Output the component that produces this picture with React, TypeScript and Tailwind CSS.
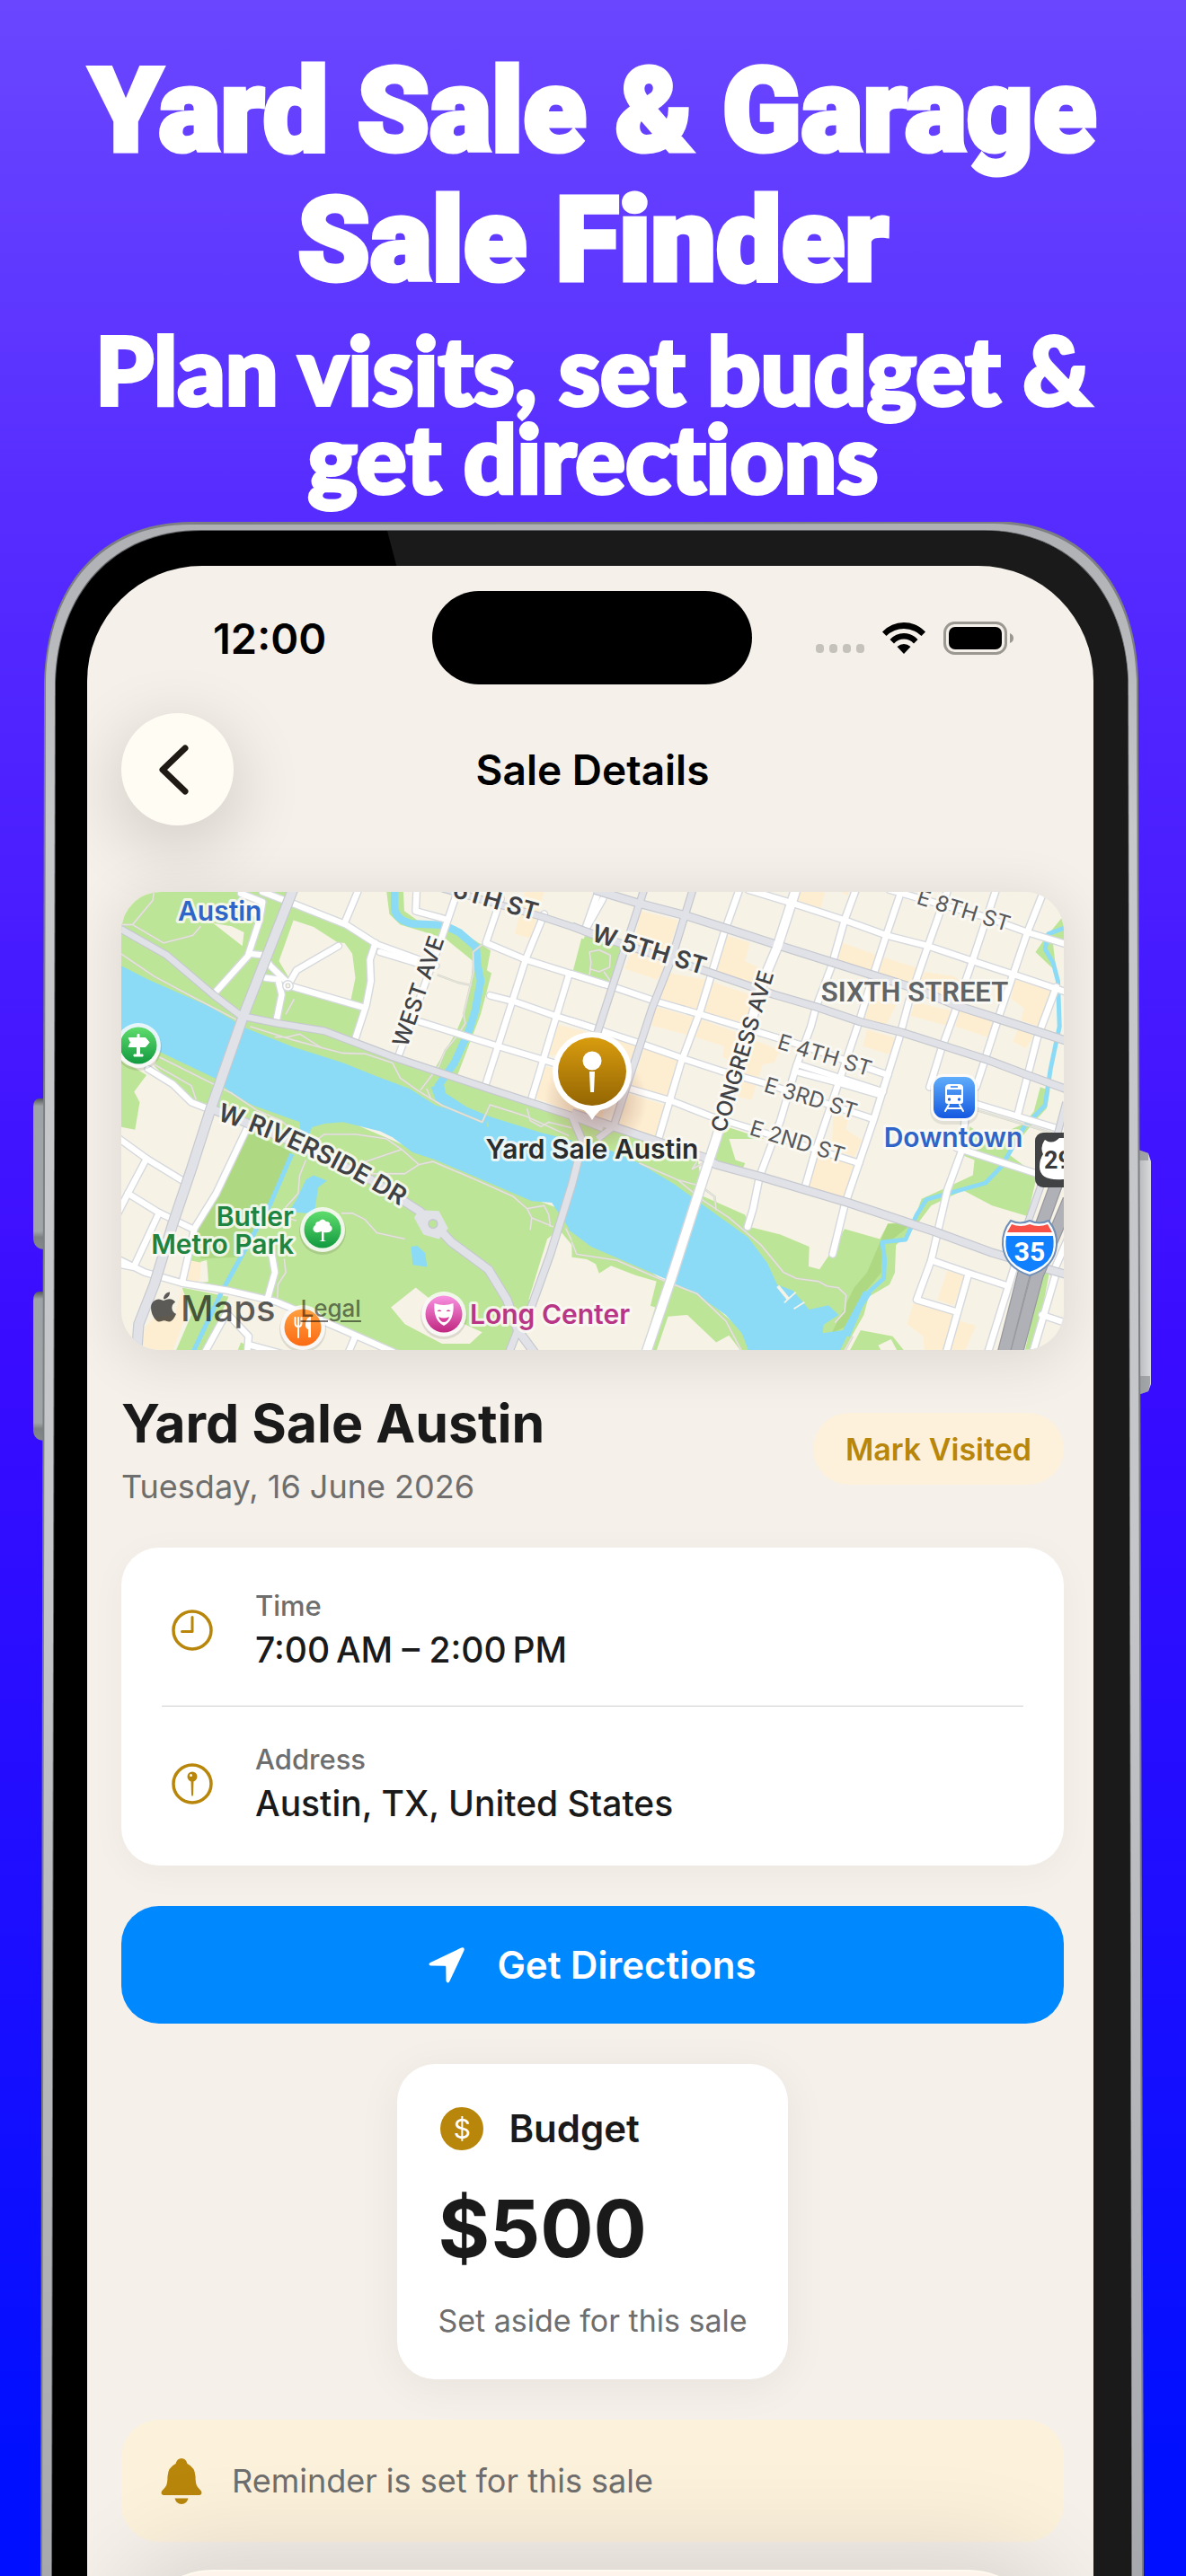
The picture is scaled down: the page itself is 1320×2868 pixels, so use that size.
import type { ReactNode } from "react";
import { FaApple } from "react-icons/fa";

/* ---------- Map geometry: two survey tiles with their own scale ---------- */

const WEST_TILE = "translate(-15 -12.5) scale(.3444 .3381)";
const EAST_TILE = "translate(505 -12.5) scale(.3571 .3381)";

type Tile = {
  transform: string;
  green: string[];
  darkGreen: string[];
  land: string[];
  peach: string[];
  water: string[];
  streams: { d: string; w: number }[];
  paths: string[];
  minor: string[];
  wide: string[];
  major: { d: string; w: number }[];
};

const west: Tile = {
  transform: WEST_TILE,
  green: [
    "M30,30H600L602,85L760,150L868,205L850,260L852,330L838,400L800,520L920,580L1230,690L1500,785L1600,815V900L1230,830L975,700L760,620L450,500L30,300Z",
    "M900,30H955L958,100L1000,130L1090,140L1160,180L1237,230L1225,295L1240,305L1205,440L1130,640L1050,630L1085,570L1125,500L1150,440L1172,350L1180,265L1090,190L1010,165L945,145L910,110Z",
    "M1545,170L1600,190V320L1505,300Z",
    "M30,580L125,640L85,695L103,730L88,820L30,808Z",
    "M170,555L345,645L480,735L640,795L640,890L450,815L380,770L290,745L150,610Z",
    "M455,815L622,845L640,790L760,785L1000,890L1210,975L1380,1050L1460,1080L1365,1385L1325,1480L1290,1560H920L740,1470L540,1385L240,1320L280,1140Z",
    "M1455,1085L1600,1200V1275L1530,1237L1455,1145L1380,1320L1370,1320Z",
    "M240,1340L390,1370L310,1560H215L270,1430Z",
    "M430,1520L450,1530V1560H415Z",
  ],
  darkGreen: ["M455,825L595,895L520,1060L420,1240L300,1245L280,1140L350,1030Z"],
  land: [
    "M600,130L665,152L745,205L765,205L790,240L800,320L785,395L600,345L553,265Z",
    "M340,140L400,150L440,170L435,215Z",
    "M430,60L495,75L485,125L400,80Z",
    "M995,1340L915,1405L960,1460L1080,1525L1170,1525L1210,1487L1130,1450Z",
    "M320,1250L325,1320L295,1325L300,1255Z",
    "M1455,1150L1395,1340L1370,1385L1360,1380L1420,1180Z",
  ],
  peach: [
    "M1350,30H1412L1367,190L1315,175Z",
    "M1455,475L1600,510V570L1425,575Z",
    "M1405,610L1600,650V815L1500,760L1380,715Z",
    "M262,1250L302,1258L296,1325L255,1318Z",
    "M150,1440L215,1430L240,1345L250,1440L205,1560H110L120,1470Z",
  ],
  water: [
    "M30,273L130,325L330,415L450,487L600,548L760,600L870,645L975,685L1060,740L1150,765L1230,812L1228,775L1400,830L1600,880V1235L1490,1145L1460,1100L1435,1060L1370,1055L1210,985L1060,920L985,895L920,845L880,825L760,795L700,800L660,812L645,850L625,855L620,795L470,740L400,700L345,650L170,565L30,500Z",
    "M1045,680L1085,665L1092,700L1160,745L1230,775L1225,812L1120,760L1060,725Z",
    "M640,985L665,970L708,988L680,1010L668,1090L640,1095L585,1090L610,1050Z",
    "M980,1205L1000,1202L1025,1225L1032,1272L985,1265Z",
  ],
  streams: [
    { d: "M927,30V90Q930,130 985,142L1085,146L1135,170L1190,218L1195,280L1205,330L1187,430L1165,500L1120,600L1065,680", w: 25 },
    { d: "M595,900L525,1065L370,1350L272,1560", w: 15 },
  ],
  paths: [
    "M30,232L150,315L260,375L420,460",
    "M44,145H80L180,205L275,180L300,150",
    "M150,30L145,65L80,145",
    "M460,480L600,525L690,550L760,568L830,570L920,600L945,650L1000,690L1080,740L1210,795L1235,738L1350,775L1490,840",
    "M540,515H580L620,505L690,550",
    "M1210,210L1180,235L1182,300L1150,440L1155,470L1130,510L1090,560L1070,610L1010,690",
    "M1030,685L1045,720",
    "M165,580L400,700L480,755L560,790L605,830",
    "M150,605L270,675L285,720",
    "M660,865L700,835H800L900,850L950,885L820,930",
    "M950,885L1005,935L960,965H850",
    "M1005,935L1050,925L1190,985L1310,1040L1355,1080L1370,1110L1440,1140",
    "M1355,1080L1410,1070L1425,1100L1430,1140",
    "M1370,1110L1365,1150",
    "M640,920L620,970L615,1030L575,1075L578,1110L610,1120",
    "M755,1095H790L830,1115L870,1160L960,1180",
    "M570,1245L575,1290L550,1330L548,1380",
    "M1480,1145L1520,1230L1600,1235",
    "M1065,310L1130,335L1175,345",
    "M575,440L602,390",
    "M1355,750L1365,790L1400,810L1425,795L1600,840",
  ],
  minor: [
    "M500,37L610,80L770,145L870,210L1060,280",
    "M880,235L1010,275",
    "M865,205L847,260L850,330L835,410L800,520",
    "M810,30L765,140",
    "M430,42L500,70L490,130L455,240L500,245L525,280L580,335",
    "M460,240L345,370",
    "M745,215L610,295L582,345L820,415",
    "M510,320L550,325L562,375L545,460",
    "M1125,50L1075,200L1000,410L940,575",
    "M998,30L995,100L1085,125",
    "M1270,60L1222,205L1350,260L1600,340",
    "M1410,110L1350,260L1220,675",
    "M1490,310L1370,715",
    "M1010,465L1260,545L1440,600L1600,650",
    "M1235,378L1320,400L1445,445L1600,495",
    "M1600,60L1550,150",
    "M130,620L210,670L270,730L320,750",
    "M30,845L125,915L245,990",
    "M125,915L65,1030L30,1100",
    "M65,1030L160,1090L270,1145",
    "M165,1095L85,1270",
    "M30,1245L120,1290L240,1325L390,1350L540,1385L740,1470L940,1560",
    "M30,1262L80,1272",
    "M450,815L350,1030L280,1145L240,1325",
    "M525,1200L540,1290L515,1380",
    "M390,1430L455,1500L450,1560",
    "M380,1430L310,1560",
    "M455,1528L570,1560",
    "M800,1500L775,1560",
  ],
  wide: [],
  major: [
    { d: "M600,25L440,440L330,760L270,950L210,1130L150,1330L100,1460L92,1570", w: 36 },
    { d: "M30,152L190,245L340,375L430,445L550,470L700,495L920,580L1230,685L1500,775L1600,815", w: 27 },
    { d: "M320,745L430,790L620,870L850,985L1010,1090L1060,1135L1110,1190L1230,1280L1290,1380L1325,1480L1390,1570", w: 32 },
    { d: "M1080,25L1400,118L1600,185", w: 26 },
    { d: "M1500,775L1535,860L1500,1000L1430,1230L1370,1400L1325,1480L1290,1570", w: 28 },
  ],
};

const east: Tile = {
  transform: EAST_TILE,
  green: [
    "M20,190L150,220L110,345L-10,312Z",
    "M-10,775L120,815L380,900L400,1040L530,1100L545,1140L640,1165L730,1205L728,1270L762,1280L800,1220L840,1147L950,1180L975,1130L1055,1120L1080,1048L1180,1000L1240,970L1245,920L1210,905L1230,810L1290,850L1400,800L1430,760L1450,680L1480,690L1470,750L1430,795L1350,900L1440,970L1410,1105L1300,1070L1210,1020L1110,1070L1060,1140L1000,1200L997,1290L980,1330L915,1370L900,1430L830,1560H750L540,1250L380,1070L200,950L-10,870Z",
    "M470,810L590,850L480,850L500,920L530,930L520,955L425,920Z",
    "M1515,125L1540,130V190L1490,210L1500,300L1435,235L1465,190Z",
    "M-10,1170V1240L60,1250L75,1293L112,1268L190,1300L290,1330L200,1260L40,1195Z",
    "M255,1315L390,1360L520,1480L550,1560H525L480,1497L440,1520L350,1430L290,1435L250,1560H205L250,1405L235,1400Z",
    "M890,1480L990,1500L1035,1560H850Z",
    "M1455,1290L1480,1280L1430,1560H1400Z",
  ],
  darkGreen: [
    "M975,1130L1050,1130L985,1185L960,1190L955,1290L900,1360L840,1470L800,1490L870,1340L910,1290Z",
  ],
  land: ["M945,1530L985,1510L1010,1560H960Z"],
  peach: [
    "M205,100L320,130L275,300L255,325L155,290L180,220Z",
    "M270,300L430,330L380,440L270,400Z",
    "M470,180L545,205L530,265L600,300L570,360L440,310Z",
    "M405,325L575,385L545,500L385,440Z",
    "M250,415L385,455L480,490L640,560L620,600L585,605L550,722L510,712L530,620L460,580L465,545L360,510L240,478Z",
    "M215,550L325,590L290,720L175,685Z",
    "M160,700L285,740L250,852L135,815Z",
    "M110,510L190,540L150,660L120,620Z",
    "M690,30H780L765,95L685,75Z",
    "M820,30H855L850,50Z",
    "M835,205L940,245L930,305L810,270Z",
    "M955,250L1075,290L1050,350L940,310Z",
    "M1090,300L1180,315L1230,350L1200,410L1060,360Z",
    "M920,390L1000,410L970,475L895,450Z",
    "M1060,400L1180,430L1170,480L1045,445Z",
    "M1200,430L1320,465L1300,520L1185,480Z",
    "M1370,325L1485,360L1445,480L1390,460L1400,420L1360,390Z",
    "M1380,490L1430,510L1405,552L1365,530Z",
    "M910,490L1005,520L980,572L898,545Z",
    "M805,765L850,785L845,820L895,855L870,910L800,880Z",
    "M755,895L875,935L840,1045L730,1010Z",
    "M1160,1285L1215,1300L1180,1400L1130,1380Z",
    "M1055,1390L1180,1420V1445L1250,1465L1210,1560H1090L1085,1500L1035,1460Z",
  ],
  water: [
    "M50,860L200,930L310,1000L395,1065L540,1175L600,1260L630,1330L680,1350L730,1412L790,1398L822,1430L775,1462L772,1490L835,1480L900,1350L925,1360L880,1430L820,1560H545L520,1490L470,1430L390,1370L280,1310L50,1205L-20,1150V870Z",
  ],
  streams: [
    { d: "M850,1500L905,1365L962,1310L965,1250L958,1190L1030,1182L1065,1100L1095,1050L1180,1025L1280,995L1330,940L1400,810L1465,740L1482,620L1510,480L1505,330L1490,270L1465,225L1475,175L1540,150", w: 14 },
  ],
  paths: [
    "M45,310L50,270L45,235L75,228L110,245L108,285L75,300L45,290",
    "M110,330L90,300",
    "M200,930L320,985L390,1005L435,1040L440,1085",
    "M320,985L395,1050L480,1110L580,1200L650,1290L690,1310L760,1320L785,1335L820,1340L845,1365L840,1420L810,1455",
    "M-10,1190L5,1230L130,1250L260,1310L380,1360L470,1450L525,1560",
    "M400,930L365,950L380,925",
    "M865,1500L835,1560",
    "M1250,755L1500,835",
  ],
  minor: [
    "M75,30L35,150",
    "M512,30L465,170L390,430L330,600L260,850",
    "M875,30L840,130L800,280L750,420L735,480L690,610L640,790L575,975L555,1080L538,1140",
    "M1018,30L970,180L930,310L885,465L820,670L745,905L718,1005",
    "M1162,30L1100,215L1040,400L1010,520L930,790L840,1070L803,1230",
    "M1312,30L1240,260L1185,430L1140,560L1105,680",
    "M1455,50L1410,170L1320,450L1250,680",
    "M1500,350L1440,520L1380,770",
    "M540,30L680,75L840,130L970,180L1100,215L1240,265L1370,310L1540,370",
    "M980,30L1280,120L1410,170L1540,212",
    "M-10,307L120,350L260,400L390,440L560,495L700,540L975,640",
    "M-10,462L200,535L335,585L450,625L600,670L800,740L930,785",
    "M170,685L300,725L420,775L560,820L750,885L885,930",
    "M695,605L960,695",
    "M700,632L830,668L950,705",
    "M1250,735L1500,815",
    "M1190,880L1440,965",
    "M1215,790L1205,890L1160,1020L1110,1250L1065,1380L1190,1420",
    "M1110,1250L1220,1290L1350,1335",
    "M1225,1300L1155,1560",
    "M1455,1430L1540,1460",
    "M1370,1270L1285,1560",
    "M1500,1290L1425,1560",
    "M1540,1170L1490,1290",
  ],
  wide: ["M688,30L630,220L590,320L440,850L400,980L300,1310L220,1560"],
  major: [
    { d: "M60,30L200,75L345,115L480,160L640,215L850,285L1060,355L1200,415L1320,455L1540,530", w: 30 },
    { d: "M-10,150L50,175L400,295L620,375L750,415L890,465L1020,500L1285,590L1410,640L1540,690", w: 28 },
    { d: "M215,30L150,240L70,500", w: 26 },
    { d: "M367,30L300,260L240,420L120,810L70,850", w: 26 },
    { d: "M-10,765L120,810L400,910L440,935L580,975L850,1060L1120,1155L1300,1225L1540,1300", w: 30 },
    { d: "M1530,730L1505,830L1450,1010L1410,1130", w: 24 },
  ],
};

const tiles = [west, east];

const highways = ["M1500,1000L1400,1290L1335,1560", "M1540,1050L1440,1300L1375,1560"];

function MapLabel({
  x,
  y,
  rotate = 0,
  size,
  fill,
  weight = 600,
  anchor = "start",
  font = "Inter",
  children,
}: {
  x: number;
  y: number;
  rotate?: number;
  size: number;
  fill: string;
  weight?: number;
  anchor?: "start" | "middle" | "end";
  font?: string;
  children: string;
}) {
  return (
    <text
      transform={`translate(${x} ${y}) rotate(${rotate})`}
      fontFamily={`${font}, sans-serif`}
      fontSize={size}
      fontWeight={weight}
      textAnchor={anchor}
      fill={fill}
      stroke="#fbfaf5"
      strokeOpacity=".85"
      strokeWidth="6"
      strokeLinejoin="round"
      paintOrder="stroke"
    >
      {children}
    </text>
  );
}

function Poi({ x, y, fill, children }: { x: number; y: number; fill: string; children: ReactNode }) {
  return (
    <g transform={`translate(${x} ${y})`}>
      <circle cy="2" r="26" fill="#000" opacity=".1" />
      <circle r="25" fill="#fff" opacity=".82" />
      <circle r="20.5" fill={fill} />
      {children}
    </g>
  );
}

function AustinMap() {
  return (
    <svg
      className="absolute inset-0 size-full"
      viewBox="0 0 1049 510"
      preserveAspectRatio="xMidYMid slice"
      role="img"
      aria-label="Map of downtown Austin"
    >
      <defs>
        <linearGradient id="poiGreen" x1="0" y1="0" x2="0" y2="1"><stop stopColor="#5fdc6c" /><stop offset="1" stopColor="#129a40" /></linearGradient>
        <linearGradient id="poiOrange" x1="0" y1="0" x2="0" y2="1"><stop stopColor="#ffa040" /><stop offset="1" stopColor="#fb6a14" /></linearGradient>
        <linearGradient id="poiPink" x1="0" y1="0" x2="0" y2="1"><stop stopColor="#f992e2" /><stop offset="1" stopColor="#c0267f" /></linearGradient>
        <linearGradient id="poiBlue" x1="0" y1="0" x2="0" y2="1"><stop stopColor="#5fadfb" /><stop offset="1" stopColor="#1459e0" /></linearGradient>
        <linearGradient id="pinGold" x1="0" y1="0" x2="0" y2="1"><stop stopColor="#d99c0f" /><stop offset="1" stopColor="#946603" /></linearGradient>
        <radialGradient id="pinShade"><stop stopColor="#7a3b2a" stopOpacity=".45" /><stop offset="1" stopColor="#7a3b2a" stopOpacity="0" /></radialGradient>
        <path id="riverside" d="M106,254Q212,287 330,362" />
      </defs>
      <rect width="1049" height="510" fill="#f6f2e6" />

      {tiles.map((t) => (
        <g key={t.transform} transform={t.transform}>
          {t.green.map((d) => <path key={d} d={d} fill="#bde597" />)}
          {t.darkGreen.map((d) => <path key={d} d={d} fill="#aed982" />)}
          {t.land.map((d) => <path key={d} d={d} fill="#f6f2e6" />)}
          {t.peach.map((d) => <path key={d} d={d} fill="#feeed1" />)}
          {t.water.map((d) => <path key={d} d={d} fill="#8bdbf6" />)}
          {t.streams.map((s) => (
            <path key={s.d} d={s.d} fill="none" stroke="#8bdbf6" strokeWidth={s.w} strokeLinejoin="round" />
          ))}
          {t.paths.map((d) => <path key={d} d={d} fill="none" stroke="#cfd3c6" strokeWidth="7" strokeLinejoin="round" />)}
          {t.paths.map((d) => <path key={`${d}i`} d={d} fill="none" stroke="#e6e4dc" strokeWidth="4" strokeLinejoin="round" />)}
        </g>
      ))}
      <g transform={EAST_TILE} stroke="#f6f2e6" fill="none">
        <path d="M632,1335L665,1378" strokeWidth="10" />
        <path d="M652,1390L688,1355M682,1410L715,1388" strokeWidth="5" />
      </g>

      {tiles.map((t) => (
        <g key={t.transform} transform={t.transform} fill="none" stroke="#d5d8dc" strokeLinejoin="round" strokeLinecap="round">
          {t.minor.map((d) => <path key={d} d={d} strokeWidth="27" />)}
          {t.wide.map((d) => <path key={d} d={d} strokeWidth="35" />)}
        </g>
      ))}
      {tiles.map((t) => (
        <g key={t.transform} transform={t.transform} fill="none" stroke="#fff" strokeLinejoin="round" strokeLinecap="round">
          {t.minor.map((d) => <path key={d} d={d} strokeWidth="19" />)}
        </g>
      ))}
      {tiles.map((t) => (
        <g key={t.transform} transform={t.transform} fill="none" stroke="#c6c9cf" strokeLinejoin="round">
          {t.major.map((m) => <path key={m.d} d={m.d} strokeWidth={m.w} />)}
        </g>
      ))}
      {tiles.map((t) => (
        <g key={t.transform} transform={t.transform} fill="none" stroke="#e1e2e8" strokeLinejoin="round">
          {t.major.map((m) => <path key={m.d} d={m.d} strokeWidth={m.w - 7} />)}
        </g>
      ))}
      <g transform={EAST_TILE} fill="none" strokeLinejoin="round">
        <path d={east.wide[0]} stroke="#fff" strokeWidth="27" />
        {highways.map((d) => <path key={d} d={d} stroke="#98999f" strokeWidth="42" />)}
        {highways.map((d) => <path key={`${d}i`} d={d} stroke="#b0b1b7" strokeWidth="35" />)}
      </g>
      <g transform={WEST_TILE}>
        <circle cx="582" cy="346" r="17" fill="#fff" stroke="#d5d8dc" strokeWidth="4" />
        <circle cx="582" cy="346" r="7" fill="#f6f2e6" stroke="#d0d3cf" strokeWidth="3" />
        <path d="M1005,1085L1070,1088L1100,1145L1070,1180L1020,1165L990,1110Z" fill="#e1e2e8" />
        <circle cx="1051" cy="1130" r="14" fill="#bde597" stroke="#c6c9cf" strokeWidth="5" />
      </g>

      {/* Street names */}
      <MapLabel x={461} y={32} rotate={16} size={27} fill="#3f4144" anchor="end">6TH ST</MapLabel>
      <MapLabel x={318} y={174} rotate={-71} size={25} fill="#3f4144" weight={500}>WEST AVE</MapLabel>
      <MapLabel x={522} y={54} rotate={17} size={27} fill="#3f4144">W 5TH ST</MapLabel>
      <MapLabel x={672} y={269} rotate={-73} size={24} fill="#3f4144" weight={500}>CONGRESS AVE</MapLabel>
      <MapLabel x={729} y={174} rotate={17} size={24} fill="#55575a" weight={400}>E 4TH ST</MapLabel>
      <MapLabel x={714} y={222} rotate={17} size={24} fill="#55575a" weight={400}>E 3RD ST</MapLabel>
      <MapLabel x={698} y={270} rotate={17} size={24} fill="#55575a" weight={400}>E 2ND ST</MapLabel>
      <MapLabel x={884} y={13} rotate={17} size={24} fill="#55575a" weight={400}>E 8TH ST</MapLabel>
      <text
        fontFamily="Inter, sans-serif"
        fontSize="28"
        fontWeight="600"
        fill="#3f4144"
        stroke="#fbfaf5"
        strokeOpacity=".85"
        strokeWidth="6"
        strokeLinejoin="round"
        paintOrder="stroke"
      >
        <textPath href="#riverside">W RIVERSIDE DR</textPath>
      </text>

      {/* Highway shields */}
      <g>
        <rect x="1017" y="268" width="80" height="61" rx="9" fill="#414244" />
        <path d="M1028,276Q1036,282 1044,274H1080V320H1048Q1022,322 1022,306Q1022,298 1026,292Q1022,284 1028,276Z" fill="#fff" />
        <text x="1027" y="308" fontFamily="Roboto, sans-serif" fontSize="27" fontWeight="700" fill="#3a3a3a">290</text>
      </g>
      <g transform="translate(1011 396)">
        <path d="M-21,-30Q-11,-25 0,-30Q11,-25 21,-30Q31,-18 30,-3Q28,22 0,31Q-28,22 -30,-3Q-31,-18 -21,-30Z" fill="#fff" stroke="#6f8fb8" strokeWidth="2" />
        <path d="M-20,-26Q-10,-22 0,-26Q10,-22 20,-26L25,-17H-25Z" fill="#f75148" />
        <path d="M-26,-13H26Q28,0 24,9Q18,21 0,27Q-18,21 -24,9Q-28,0 -26,-13Z" fill="#1080ff" />
        <text y="15" fontFamily="Roboto, sans-serif" fontSize="30" fontWeight="700" fill="#fff" textAnchor="middle">35</text>
      </g>

      {/* Places */}
      <Poi x={19} y={171} fill="url(#poiGreen)">
        <path d="M-11,-8.500H-1V-12.500H1V-8.500H8L12,-3.500L8,1.500H1.500V10H5V12H-5V10H-1.500V1.500H-11L-8.500,-3.500Z" fill="#fff" stroke="#fff" strokeWidth="1" strokeLinejoin="round" />
      </Poi>
      <Poi x={224} y={376} fill="url(#poiGreen)">
        <path d="M-1,12V2Q-9,5 -10.500,0Q-11,-3 -8,-5Q-8,-9 -4,-9Q0,-14 4,-9Q9,-9 8,-5Q12,-3 10,1Q8,4 1.500,3V12L4,13H-4Z" fill="#fff" />
      </Poi>
      <Poi x={202} y={485} fill="url(#poiOrange)">
        <path d="M-8.500,-11V-5Q-8.500,-1 -5,-1Q-1.500,-1 -1.500,-5V-11M-5,-11V11" stroke="#fff" strokeWidth="2" fill="none" strokeLinecap="round" />
        <path d="M8,-12Q3,-10 3,-3Q3,1 6,2V11H9V-12Z" fill="#fff" />
      </Poi>
      <Poi x={359} y={470} fill="url(#poiPink)">
        <path d="M-10.500,-12Q0,-8 10.500,-12Q12,7 0,13Q-12,7 -10.500,-12Z" fill="#fff" />
        <path d="M-7.500,-3Q-5,-6.500 -2.500,-3ZM2.500,-3Q5,-6.500 7.500,-3ZM-6,3Q0,6 6,3Q4,9 0,9Q-4,9 -6,3Z" fill="#d9409c" />
      </Poi>
      <g transform="translate(927 229)">
        <rect x="-27" y="-25" width="54" height="55" rx="15" fill="#000" opacity=".08" />
        <rect x="-26" y="-26" width="52" height="52" rx="14" fill="#fff" opacity=".82" />
        <rect x="-23" y="-23" width="46" height="46" rx="11" fill="url(#poiBlue)" />
        <path d="M-10,-11Q-10,-15 -5,-15H5Q10,-15 10,-11V4Q10,7 7,7H-7Q-10,7 -10,4ZM-8,-9V-3H8V-9Z" fill="#fff" fillRule="evenodd" />
        <path d="M-4,-12H4" stroke="#2a7cf0" strokeWidth="1.500" />
        <circle cx="-5.500" cy="2" r="1.700" fill="#2468e8" />
        <circle cx="5.500" cy="2" r="1.700" fill="#2468e8" />
        <path d="M-6,8L-10,15M6,8L10,15M-8,12H8" stroke="#fff" strokeWidth="2" strokeLinecap="round" />
      </g>

      <MapLabel x={63} y={32} size={30} fill="#2f65c8">Austin</MapLabel>
      <MapLabel x={926} y={284} size={30} fill="#2f65c8" anchor="middle">Downtown</MapLabel>
      <MapLabel x={192} y={372} size={30} fill="#1f843f" anchor="end">Butler</MapLabel>
      <MapLabel x={192} y={403} size={30} fill="#1f843f" anchor="end">Metro Park</MapLabel>
      <MapLabel x={388} y={481} size={30} fill="#b93585">Long Center</MapLabel>
      <MapLabel x={883} y={122} size={31} fill="#606467" anchor="middle" font="Roboto">SIXTH STREET</MapLabel>

      {/* Selected sale pin */}
      <circle cx="528" cy="232" r="58" fill="url(#pinShade)" />
      <circle cx="524" cy="200" r="44" fill="#fff" />
      <path d="M504,236Q518,243 524,254Q530,243 544,236Z" fill="#fff" />
      <circle cx="524" cy="200" r="38" fill="url(#pinGold)" />
      <circle cx="524" cy="188" r="10.500" fill="#fff" />
      <path d="M521,200H527L526,223H522Z" fill="#fff" />
      <MapLabel x={524} y={297} size={30} fill="#2b2c2e" anchor="middle">Yard Sale Austin</MapLabel>
    </svg>
  );
}

/* ---------- Icons ---------- */

function ClockIcon() {
  return (
    <svg className="size-[46px] shrink-0" viewBox="0 0 46 46" fill="none" stroke="#b8860b" strokeWidth="3.500" strokeLinecap="round" strokeLinejoin="round" aria-hidden="true">
      <circle cx="23" cy="23" r="21" />
      <path d="M23,8.500V24.500H11.500" strokeWidth="3" />
    </svg>
  );
}

function PinIcon() {
  return (
    <svg className="size-[46px] shrink-0" viewBox="0 0 46 46" aria-hidden="true">
      <circle cx="23" cy="23" r="21" fill="none" stroke="#b8860b" strokeWidth="3.500" />
      <circle cx="23" cy="15" r="5.500" fill="#b8860b" />
      <circle cx="21.500" cy="13.500" r="1.500" fill="#fff" />
      <path d="M21.500,19H24.500L24,35Q23,39 22,35Z" fill="#b8860b" />
    </svg>
  );
}

function ArrowIcon() {
  return (
    <svg className="size-10" viewBox="0 0 40 40" fill="#fff" aria-hidden="true">
      <path d="M1.500,17.200L36.500,.5Q40.500,-.6 39.500,3.500L23.200,38.300Q21,41 19.500,37.500L19.300,21.700Q19.200,20.700 18.200,20.700L2.500,20.500Q-1,19.500 1.500,17.200Z" />
    </svg>
  );
}

function BellIcon() {
  return (
    <svg className="h-[51px] w-[46px] shrink-0" viewBox="0 0 46 51" fill="#b8860b" aria-hidden="true">
      <path d="M23,0Q28,0 29.500,6Q38,10 38.500,20Q38.500,29 41,32L45,36.500Q46.500,41 42.500,41H3.500Q-.5,41 1,36.500L5,32Q7.500,29 7.500,20Q8,10 16.500,6Q18,0 23,0Z" />
      <path d="M15.500,44.500H30.500Q29,51 23,51Q17,51 15.500,44.500Z" />
    </svg>
  );
}

function StatusIcons() {
  return (
    <div className="flex items-center gap-5">
      <div className="flex gap-1.5 pt-6" aria-hidden="true">
        {[0, 1, 2, 3].map((i) => (
          <span key={i} className="h-2.5 w-[9px] rounded-[4px] bg-[#c5c2bb]" />
        ))}
      </div>
      <svg className="h-[35px] w-12" viewBox="0 0 48 35" aria-label="Wi-Fi">
        <path d="M0,10.500Q10,0 24,0Q38,0 48,10.500L43.500,15Q35,7 24,7Q13,7 4.500,15Z" />
        <path d="M8.500,19Q15,12 24,12Q33,12 39.500,19L35,23.500Q30.500,18.500 24,18.500Q17.500,18.500 13,23.500Z" />
        <path d="M16.500,27Q20,24 24,24Q28,24 31.500,27L24,35Z" />
      </svg>
      <svg className="h-[37px] w-[79px]" viewBox="0 0 79 37" aria-label="Battery full">
        <rect x="1.500" y="1.500" width="68" height="34" rx="11" fill="none" stroke="#9b9892" strokeWidth="3" />
        <rect x="6" y="6" width="59" height="25" rx="7" />
        <path d="M74,13Q78,14.500 78,18.500Q78,22.500 74,24Z" fill="#9b9892" />
      </svg>
    </div>
  );
}

/* Metal band, side keys and glass border of the handset */
function PhoneBody() {
  return (
    <svg className="absolute inset-0 size-full" viewBox="0 0 1320 2287" preserveAspectRatio="xMidYMin slice" aria-hidden="true">
      <defs>
        <linearGradient id="metal" x1="0" y1="0" x2="0" y2="1">
          <stop stopColor="#aeb0b3" />
          <stop offset=".15" stopColor="#c6c8ca" />
          <stop offset=".5" stopColor="#c4c6c9" />
          <stop offset="1" stopColor="#a6a8ad" />
        </linearGradient>
        <linearGradient id="keyLeft" x1="0" y1="0" x2="0" y2="1">
          <stop stopColor="#55585a" />
          <stop offset=".05" stopColor="#9da3a6" />
          <stop offset=".88" stopColor="#a0a5a8" />
          <stop offset=".92" stopColor="#7d8184" />
          <stop offset="1" stopColor="#85898c" />
        </linearGradient>
        <linearGradient id="keyRight" x1="0" y1="0" x2="1" y2="0">
          <stop stopColor="#b4b6b9" />
          <stop offset="1" stopColor="#d9dadc" />
        </linearGradient>
      </defs>
      <path d="M50,642H43Q37,643 37,652V798Q38,810 50,810Z" fill="url(#keyLeft)" />
      <path d="M50,857H43Q37,858 37,867V1012Q38,1023 50,1023Z" fill="url(#keyLeft)" />
      <path d="M1266,699L1278,703L1281,712V960L1278,968L1266,972Z" fill="url(#keyRight)" />
      <path d="M1267,699L1278,703V711H1267ZM1267,951H1280V960L1278,968L1267,972Z" fill="#8f9193" opacity=".7" />
      <path d="M45,2290L49,178C52,70 112,1 212,0L1106,-1C1206,0 1264,70 1267,176L1273,2290Z" fill="#7d7f83" />
      <path d="M47,2290L51,178C54,72 114,3 212,3L1106,2C1204,3 1262,72 1265,176L1271,2290Z" fill="url(#metal)" />
      <path d="M57,2290L61,178C64,80 124,9 224,9H1094C1194,9 1252,80 1256,176L1260,2290Z" fill="#5f6164" />
      <path d="M58,2290L62,178C65,81 125,10 224,10H1094C1193,10 1251,81 1255,176L1259,2290Z" fill="#000" />
      <path d="M431,10H1094C1193,10 1251,81 1255,176L1259,2290H660V120H460Z" fill="#1a1a1a" />
    </svg>
  );
}

function DetailRow({ icon, label, value }: { icon: ReactNode; label: string; value: string }) {
  return (
    <div className="flex h-[171px] items-center gap-[47px] pl-[11px]">
      {icon}
      <dl className="pb-1.5 leading-[49px]">
        <dt className="text-[31px] font-medium text-[#6e6e6e]">{label}</dt>
        <dd className="text-[39px] font-medium text-[#1a1a1a]">{value}</dd>
      </dl>
    </div>
  );
}

export default function App() {
  return (
    <div className="flex h-screen flex-col overflow-hidden bg-[linear-gradient(180deg,#6a46ff_0%,#552bff_21%,#3a0cff_52%,#000fff_96%)] font-['Inter',sans-serif]">
      <header className="pt-[52px] text-center text-white">
        <h1 className="font-['Roboto',sans-serif] text-[129px] leading-[144px] font-black [-webkit-text-stroke:5px_white] [stroke-linejoin:round]">
          Yard Sale &amp; Garage
          <br />
          Sale Finder
        </h1>
        <p className="mt-[22px] font-['Lato',sans-serif] text-[104px] leading-[98px] font-black [-webkit-text-stroke:4px_white] [font-variant-ligatures:none] [stroke-linejoin:round]">
          Plan visits, set budget &amp;
          <br />
          get directions
        </p>
      </header>

      <section className="relative mt-[23px] flex min-h-0 flex-1 pt-[49px] pr-[103px] pl-[97px]">
        <PhoneBody />
        <div className="relative min-w-0 flex-1 overflow-hidden rounded-t-[128px] bg-[#f5f0e9]">
          <div className="grid grid-cols-[1fr_auto_1fr] items-center pt-7 pr-[88px] pl-[140px]">
            <time className="text-[47px] leading-none font-semibold text-black">12:00</time>
            <div className="-ml-12 h-[104px] w-[356px] rounded-full bg-black" />
            <div className="flex justify-end">
              <StatusIcons />
            </div>
          </div>

          <div className="grid grid-cols-[125px_1fr_125px] items-center pt-8 pr-[33px] pl-[38px]">
            <button
              type="button"
              aria-label="Back"
              className="flex size-[125px] items-center justify-center rounded-full bg-[#fffcf4] shadow-[0_20px_70px_12px_rgba(0,0,0,0.12)]"
            >
              <svg className="mr-2.5 h-14 w-9" viewBox="0 0 36 56" fill="none" stroke="#1f1a14" strokeWidth="7" strokeLinecap="round" strokeLinejoin="round" aria-hidden="true">
                <path d="M31,4L6,28L31,52" />
              </svg>
            </button>
            <h2 className="text-center text-[46px] leading-none font-semibold text-black">Sale Details</h2>
          </div>

          <main className="flex flex-col gap-[45px] pt-[74px] pr-[33px] pl-[38px]">
            <div className="relative h-[510px] rounded-[44px] shadow-[0_8px_60px_8px_rgba(0,0,0,0.09)]">
              <div className="absolute inset-0 overflow-hidden rounded-[44px]">
                <AustinMap />
                <div className="absolute bottom-[18px] left-[28px] flex items-center text-[#000000a0]">
                  <FaApple className="mb-1 size-[38px]" aria-hidden="true" />
                  <span className="text-[40px] leading-[56px] font-medium">Maps</span>
                  <a href="#legal" className="ml-7 text-[26px] leading-8 font-medium text-[#00000085] underline underline-offset-4">
                    Legal
                  </a>
                </div>
              </div>
            </div>

            <div className="flex items-center justify-between">
              <div>
                <h3 className="text-[59px] leading-[74px] font-bold text-[#1a1a1a]">Yard Sale Austin</h3>
                <p className="mt-2.5 text-[36px] leading-[46px] text-[#6e6e6e]">Tuesday, 16 June 2026</p>
              </div>
              <button type="button" className="h-20 rounded-full bg-[#fdf1db] px-9 text-[34px] font-semibold text-[#b8860b]">
                Mark Visited
              </button>
            </div>

            <div className="rounded-[42px] bg-white px-[45px] py-1.5 shadow-[0_8px_40px_rgba(0,0,0,0.04)]">
              <DetailRow icon={<ClockIcon />} label="Time" value={"7:00\u2009AM – 2:00\u2009PM"} />
              <div className="-mt-px h-px bg-[#cfcfcf]" />
              <DetailRow icon={<PinIcon />} label="Address" value="Austin, TX, United States" />
            </div>

            <button type="button" className="flex h-[131px] items-center justify-center gap-9 rounded-[42px] bg-[#0088ff] text-[42px] font-semibold text-white">
              <ArrowIcon />
              Get Directions
            </button>

            <div className="self-center rounded-[42px] bg-white p-[45px] pb-11 shadow-[0_8px_50px_rgba(0,0,0,0.06)]">
              <div className="flex items-center gap-7 leading-[54px]">
                <span className="ml-[3px] flex size-12 items-center justify-center rounded-full bg-[#b8860b] text-[30px] font-normal text-white">$</span>
                <h3 className="text-[42px] font-semibold text-[#1a1a1a]">Budget</h3>
              </div>
              <p className="mt-[34px] text-[88px] leading-[100px] font-bold text-[#1a1a1a]">$500</p>
              <p className="mt-8 text-[34px] leading-[42px] text-[#6e6e6e]">Set aside for this sale</p>
            </div>

            <div className="flex h-[136px] items-center gap-[33px] rounded-[42px] bg-[#fcf1db] pl-11">
              <BellIcon />
              <p className="text-[36px] text-[#6e6e6e]">Reminder is set for this sale</p>
            </div>
          </main>

          <div className="absolute inset-x-[50px] -bottom-[173px] h-[180px] rounded-[90px] border-2 border-[#fffaf0] bg-[#fff4ec] shadow-[0_0_110px_20px_rgba(0,0,0,0.12)]" />
        </div>
      </section>
    </div>
  );
}
